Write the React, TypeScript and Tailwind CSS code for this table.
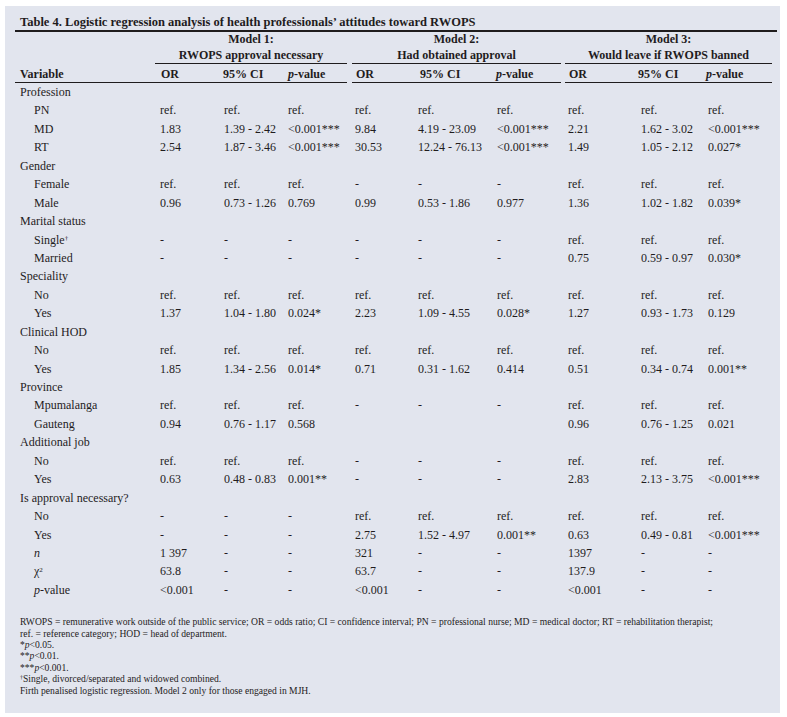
import type { ReactNode } from 'react';

interface Row {
  label: ReactNode;
  sub?: boolean;
  cells?: string[];
}

const COLS = 'grid grid-cols-[140px_64px_64px_67px_63px_79px_71px_73px_67px_69px]';

const R = ['ref.', 'ref.', 'ref.'];
const D = ['-', '-', '-'];
const E = ['', '', ''];

const rows: Row[] = [
  { label: 'Profession' },
  { label: 'PN', sub: true, cells: [...R, ...R, ...R] },
  { label: 'MD', sub: true, cells: ['1.83', '1.39 - 2.42', '<0.001***', '9.84', '4.19 - 23.09', '<0.001***', '2.21', '1.62 - 3.02', '<0.001***'] },
  { label: 'RT', sub: true, cells: ['2.54', '1.87 - 3.46', '<0.001***', '30.53', '12.24 - 76.13', '<0.001***', '1.49', '1.05 - 2.12', '0.027*'] },
  { label: 'Gender' },
  { label: 'Female', sub: true, cells: [...R, ...D, ...R] },
  { label: 'Male', sub: true, cells: ['0.96', '0.73 - 1.26', '0.769', '0.99', '0.53 - 1.86', '0.977', '1.36', '1.02 - 1.82', '0.039*'] },
  { label: 'Marital status' },
  {
    label: (
      <>
        Single<sup className="text-[7px]">†</sup>
      </>
    ),
    sub: true,
    cells: [...D, ...D, ...R],
  },
  { label: 'Married', sub: true, cells: [...D, ...D, '0.75', '0.59 - 0.97', '0.030*'] },
  { label: 'Speciality' },
  { label: 'No', sub: true, cells: [...R, ...R, ...R] },
  { label: 'Yes', sub: true, cells: ['1.37', '1.04 - 1.80', '0.024*', '2.23', '1.09 - 4.55', '0.028*', '1.27', '0.93 - 1.73', '0.129'] },
  { label: 'Clinical HOD' },
  { label: 'No', sub: true, cells: [...R, ...R, ...R] },
  { label: 'Yes', sub: true, cells: ['1.85', '1.34 - 2.56', '0.014*', '0.71', '0.31 - 1.62', '0.414', '0.51', '0.34 - 0.74', '0.001**'] },
  { label: 'Province' },
  { label: 'Mpumalanga', sub: true, cells: [...R, ...D, ...R] },
  { label: 'Gauteng', sub: true, cells: ['0.94', '0.76 - 1.17', '0.568', ...E, '0.96', '0.76 - 1.25', '0.021'] },
  { label: 'Additional job' },
  { label: 'No', sub: true, cells: [...R, ...D, ...R] },
  { label: 'Yes', sub: true, cells: ['0.63', '0.48 - 0.83', '0.001**', ...D, '2.83', '2.13 - 3.75', '<0.001***'] },
  { label: 'Is approval necessary?' },
  { label: 'No', sub: true, cells: [...D, ...R, ...R] },
  { label: 'Yes', sub: true, cells: [...D, '2.75', '1.52 - 4.97', '0.001**', '0.63', '0.49 - 0.81', '<0.001***'] },
  { label: <i>n</i>, sub: true, cells: ['1 397', '-', '-', '321', '-', '-', '1397', '-', '-'] },
  {
    label: (
      <>
        χ<sup className="text-[7px]">2</sup>
      </>
    ),
    sub: true,
    cells: ['63.8', '-', '-', '63.7', '-', '-', '137.9', '-', '-'],
  },
  {
    label: (
      <>
        <i>p</i>-value
      </>
    ),
    sub: true,
    cells: ['<0.001', '-', '-', '<0.001', '-', '-', '<0.001', '-', '-'],
  },
];

const models = [
  { title: 'Model 1:', sub: 'RWOPS approval necessary', cls: 'mr-[3px]' },
  { title: 'Model 2:', sub: 'Had obtained approval', cls: 'ml-[2px] mr-[2px]' },
  { title: 'Model 3:', sub: 'Would leave if RWOPS banned', cls: 'ml-[2px]' },
];

const PVal = () => (
  <>
    <i>p</i>-value
  </>
);

export default function App() {
  return (
    <div className="min-h-[717px] bg-white pt-[6px] pl-[5px] font-['Liberation_Serif',serif] text-[#1f1c1d]">
      <div className="w-[775px] h-[707px] bg-[#e2e5ee] pt-[8px] pl-[10px] pr-[3px]">
        {/* Title */}
        <div className="h-[18px] border-b-2 border-[#1f1c1d] pl-[5px] text-[12.5px] leading-[16px] font-bold">
          Table 4. Logistic regression analysis of health professionals’ attitudes toward RWOPS
        </div>

        {/* Header */}
        <div className={`${COLS} text-[12px] font-bold`}>
          <div />
          {models.map((m) => (
            <div key={m.title} className={`col-span-3 border-b border-[#1f1c1d] text-center leading-[15.5px] ${m.cls}`}>
              <div>{m.title}</div>
              <div>{m.sub}</div>
            </div>
          ))}
        </div>
        <div className={`${COLS} h-[19px] text-[12px] font-bold leading-[15px] pt-[3px]`}>
          <div className="pl-[5px] border-b-[1.5px] border-[#1f1c1d]">Variable</div>
          <div className="pl-[6px] border-b-[1.5px] border-[#1f1c1d]">OR</div>
          <div className="pl-[4px] border-b-[1.5px] border-[#1f1c1d]">95% CI</div>
          <div className="pl-[5px] mr-[3px] border-b-[1.5px] border-[#1f1c1d]">
            <PVal />
          </div>
          <div className="ml-[2px] pl-[4px] border-b-[1.5px] border-[#1f1c1d]">OR</div>
          <div className="pl-[7px] border-b-[1.5px] border-[#1f1c1d]">95% CI</div>
          <div className="pl-[4px] mr-[2px] border-b-[1.5px] border-[#1f1c1d]">
            <PVal />
          </div>
          <div className="ml-[2px] pl-[4px] border-b-[1.5px] border-[#1f1c1d]">OR</div>
          <div className="pl-[2px] border-b-[1.5px] border-[#1f1c1d]">95% CI</div>
          <div className="pl-[3px] border-b-[1.5px] border-[#1f1c1d]">
            <PVal />
          </div>
        </div>

        {/* Body */}
        <div className="text-[12px]">
          {rows.map((row, i) => (
            <div key={i} className={`${COLS} h-[18.44px] leading-[18.44px] whitespace-nowrap`}>
              <div className={row.sub ? 'pl-[19px]' : 'pl-[5px]'}>{row.label}</div>
              {row.cells?.map((c, j) => (
                <div key={j} className="pl-[5px]">
                  {c}
                </div>
              ))}
            </div>
          ))}
        </div>

        {/* Footnotes */}
        <div className="mt-[17px] pl-[5px] text-[9.6px] leading-[11.4px] whitespace-nowrap">
          <p>
            RWOPS = remunerative work outside of the public service; OR = odds ratio; CI = confidence interval; PN = professional nurse; MD = medical doctor; RT = rehabilitation therapist;
          </p>
          <p>ref. = reference category; HOD = head of department.</p>
          <p>
            *<i>p</i>&lt;0.05.
          </p>
          <p>
            **<i>p</i>&lt;0.01.
          </p>
          <p>
            ***<i>p</i>&lt;0.001.
          </p>
          <p>
            <sup className="text-[6px]">†</sup>Single, divorced/separated and widowed combined.
          </p>
          <p>Firth penalised logistic regression. Model 2 only for those engaged in MJH.</p>
        </div>
      </div>
    </div>
  );
}
